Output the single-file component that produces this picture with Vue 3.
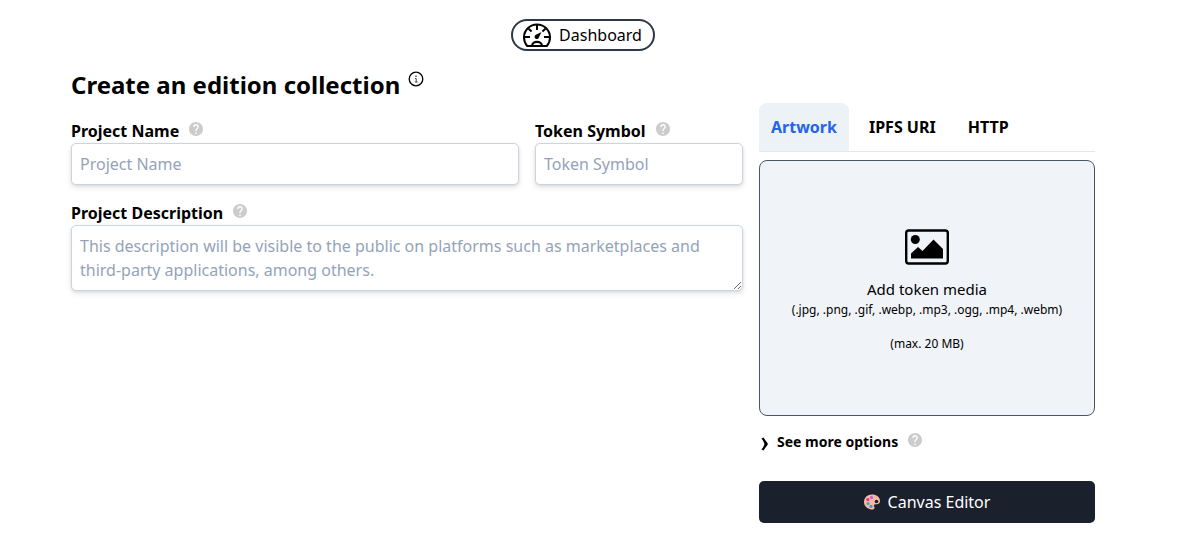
<script setup>
import { ref } from 'vue'

const tabs = ['Artwork', 'IPFS URI', 'HTTP']
const activeTab = ref('Artwork')
const projectName = ref('')
const tokenSymbol = ref('')
const description = ref('')
const helpPath =
  'M12 2C6.48 2 2 6.48 2 12s4.48 10 10 10 10-4.48 10-10S17.52 2 12 2zm1 17h-2v-2h2v2zm2.07-7.75l-.9.92C13.45 12.9 13 13.5 13 15h-2v-.5c0-1.1.45-2.1 1.17-2.83l1.24-1.26c.37-.36.59-.86.59-1.41 0-1.1-.9-2-2-2s-2 .9-2 2H8c0-2.21 1.79-4 4-4s4 1.79 4 4c0 .88-.36 1.68-.93 2.25z'
</script>

<template>
  <div class="page">
    <header class="top">
      <a class="pill" href="#dashboard">
        <svg class="gauge" viewBox="0 0 28 26" fill="none" stroke="#000" aria-hidden="true">
          <path d="M4.2 24A13 13 0 1 1 23.800 24Z" stroke-width="2" stroke-linejoin="round" />
          <path d="M14 2v6M2 15h5M21 15h5M5.600 6.800l3 2.600M22.400 6.800l-3 2.600" stroke-width="2" />
          <path d="M18.500 10l-2.600 5.400a2.200 2.200 0 1 1-3-2.600z" fill="#000" stroke="none" />
          <path d="M9 24c0-5.500 10-5.500 10 0" stroke-width="2.200" />
        </svg>
        <span>Dashboard</span>
      </a>
    </header>

    <main class="layout">
      <section class="details">
        <h1>
          Create an edition collection
          <svg class="info" viewBox="0 0 16 16" fill="none" stroke="#000" aria-hidden="true">
            <circle cx="8" cy="8" r="6.8" stroke-width="1.3" />
            <path d="M7 7.500h1.200v3.500M6.800 11h2.800" stroke-width=".9" stroke="#333" />
            <circle cx="8" cy="5.200" r=".8" fill="#222" stroke="none" />
          </svg>
        </h1>
        <div class="fields">
          <div class="field">
            <label for="name">Project Name
              <svg class="help" viewBox="2 2 20 20" aria-hidden="true"><path :d="helpPath" /></svg>
            </label>
            <input id="name" v-model="projectName" type="text" placeholder="Project Name" />
          </div>
          <div class="field">
            <label for="symbol">Token Symbol
              <svg class="help" viewBox="2 2 20 20" aria-hidden="true"><path :d="helpPath" /></svg>
            </label>
            <input id="symbol" v-model="tokenSymbol" type="text" placeholder="Token Symbol" />
          </div>
        </div>
        <div class="field">
          <label for="description">Project Description
            <svg class="help" viewBox="2 2 20 20" aria-hidden="true"><path :d="helpPath" /></svg>
          </label>
          <textarea
            id="description"
            v-model="description"
            rows="2"
            placeholder="This description will be visible to the public on platforms such as marketplaces and third-party applications, among others."
          ></textarea>
        </div>
      </section>

      <aside class="media">
        <nav class="tabs">
          <button
            v-for="tab in tabs"
            :key="tab"
            type="button"
            :class="{ active: tab === activeTab }"
            @click="activeTab = tab"
          >{{ tab }}</button>
        </nav>
        <button class="drop" type="button">
          <svg class="picture" viewBox="0 0 44 36" aria-hidden="true">
            <rect x="1.2" y="1.5" width="41.6" height="33" rx="2.500" fill="none" stroke="#000" stroke-width="2.4" />
            <circle cx="10.300" cy="10.500" r="4.500" />
            <path d="M6 29.500v-5l7-6.500 4.500 4L28.500 10.500 38 20v9.500z" />
          </svg>
          <span class="add">Add token media</span>
          <span class="types">(.jpg, .png, .gif, .webp, .mp3, .ogg, .mp4, .webm)</span>
          <span class="limit">(max. 20 MB)</span>
        </button>
        <button class="more" type="button">
          <svg class="chevron" viewBox="0 0 8 14" aria-hidden="true">
            <path d="M.5 1.500 2.500 0.500C4 3 6 5 7 7c-1 2-3 4-4.500 6.500L.5 12.500C2 10.500 3 9 3.500 7 3 5 2 3.500.5 1.500z" />
          </svg>
          <span>See more options</span>
          <svg class="help" viewBox="2 2 20 20" aria-hidden="true"><path :d="helpPath" /></svg>
        </button>
        <button class="canvas" type="button">
          <svg class="palette" viewBox="0 0 16 16" aria-hidden="true">
            <path fill="#f9b8a4" d="M8 .5C3.500.5 0 3.500 0 8c0 3.500 2.500 6 5.500 7 2 .8 4.500.8 5-.7.4-1.400-1-2.300-.5-3.400.5-1 2.500-.4 4-.9 1.500-.4 2-1.700 2-3C16 3 12.500.5 8 .5z" />
            <circle cx="12.500" cy="7.500" r="1.800" fill="#1a202c" />
            <circle cx="7.500" cy="3.500" r="1.600" fill="#c05ce0" />
            <circle cx="3.800" cy="5.600" r="1.600" fill="#f0308c" />
            <circle cx="4" cy="9.500" r="1.500" fill="#26b5b0" />
            <circle cx="7" cy="12.300" r="1.600" fill="#4a90f0" />
          </svg>
          <span>Canvas Editor</span>
        </button>
      </aside>
    </main>
  </div>
</template>

<style>
body {
  background: #fff;
}
</style>

<style scoped>
.page {
  box-sizing: border-box;
  padding: 19px 30px 11px 0;
  color: #000;
  font: 16px/24px "Noto Sans", "Open Sans", sans-serif;
}
* {
  box-sizing: border-box;
}
button, input, textarea {
  font: inherit;
  color: inherit;
}
button {
  border: 0;
  padding: 0;
  background: none;
  cursor: pointer;
}
svg {
  flex: none;
}
.top {
  display: flex;
  justify-content: center;
}
.pill {
  display: flex;
  align-items: center;
  gap: 8px;
  height: 32px;
  padding: 0 11px 0 10px;
  border: 2px solid #2d3748;
  border-radius: 16px;
  color: #000;
  text-decoration: none;
}
.gauge {
  width: 28px;
  height: 26px;
}
.layout {
  display: grid;
  grid-template-columns: 2fr 1fr;
  gap: 16px;
  max-width: 1024px;
  margin: 16px auto 0;
}
h1 {
  display: flex;
  gap: 8px;
  margin: 0 0 16px;
  font-size: 24px;
  line-height: 36px;
}
.info {
  width: 16px;
  height: 16px;
  margin-top: 4px;
}
.fields {
  display: grid;
  grid-template-columns: 448fr 208fr;
  gap: 16px;
  margin-bottom: 16px;
}
.field {
  display: flex;
  flex-direction: column;
  min-width: 0;
}
label {
  display: flex;
  align-items: center;
  gap: 10px;
  font-weight: 700;
}
.help {
  width: 14px;
  height: 14px;
  margin-bottom: 4px;
  fill: #ccc;
}
input, textarea {
  display: block;
  width: 100%;
  padding: 8px;
  border: 1px solid #cbd5e0;
  border-radius: 5px;
  background: #fff;
  box-shadow: 0 1px 3px rgba(0, 0, 0, 0.1), 0 3px 6px rgba(0, 0, 0, 0.08);
}
input {
  height: 42px;
}
textarea {
  resize: vertical;
}
input::placeholder, textarea::placeholder {
  color: #94a3b8;
  opacity: 1;
}
.media {
  display: flex;
  flex-direction: column;
  min-width: 0;
  padding-top: 36px;
}
.tabs {
  display: flex;
  gap: 8px;
  border-bottom: 1px solid #e2e8f0;
}
.tabs button {
  height: 48px;
  padding: 0 12px;
  border-radius: 8px 8px 0 0;
  font-weight: 700;
}
.tabs .active {
  background: #edf2f7;
  color: #2563eb;
}
.drop {
  display: flex;
  flex-direction: column;
  align-items: center;
  justify-content: center;
  height: 256px;
  margin-top: 8px;
  padding-top: 5px;
  border: 1px solid #4a5568;
  border-radius: 8px;
  background: #f0f4f9;
}
.picture {
  width: 44px;
  height: 36px;
  margin-bottom: 12px;
}
.add {
  font-size: 15px;
}
.types, .limit {
  font-size: 12px;
  line-height: 18px;
}
.limit {
  margin-top: 16px;
}
.more {
  display: flex;
  align-items: center;
  align-self: flex-start;
  gap: 8px;
  margin: 14px 0 27px 2px;
  font-size: 14px;
  font-weight: 700;
}
.more .help {
  margin-left: 2px;
}
.chevron {
  width: 8px;
  height: 14px;
  margin-top: 4px;
}
.canvas {
  display: flex;
  align-items: center;
  justify-content: center;
  gap: 8px;
  height: 42px;
  border-radius: 5px;
  background: #1a202c;
  color: #fff;
}
.palette {
  width: 16px;
  height: 16px;
}
</style>
